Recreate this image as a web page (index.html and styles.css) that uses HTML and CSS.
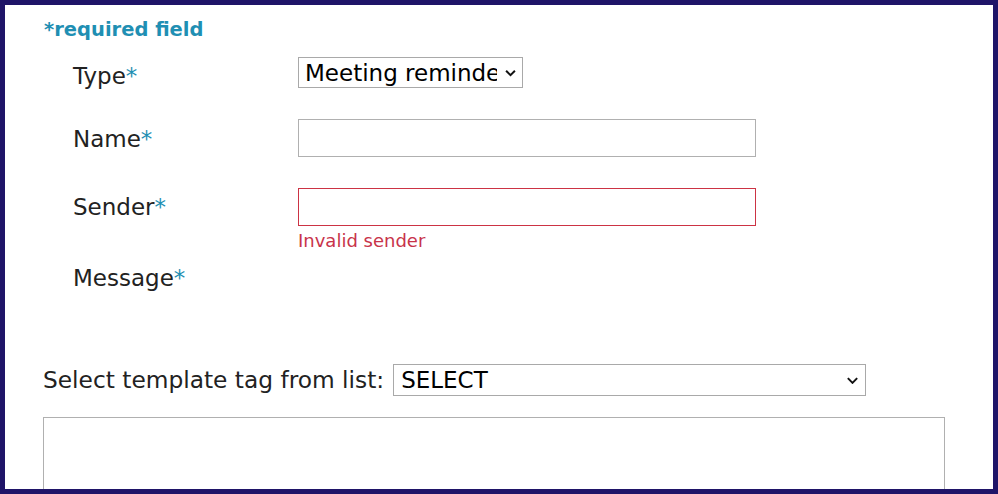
FILE: index.html
```html
<!DOCTYPE html>
<html>
<head>
<meta charset="utf-8">
<link rel="stylesheet" href="styles.css">
</head>
<body>
<div class="frame">
  <div class="required">*required field</div>
  <div class="rows">
    <div class="row row-type">
      <label class="lbl">Type<span class="star">*</span></label>
      <div class="ctl">
        <div class="select select-type"><span class="sel-text">Meeting reminder</span><svg class="chev" viewBox="0 0 10 7" width="11" height="8"><path d="M1 1.5l4 4 4-4" fill="none" stroke="#111" stroke-width="1.8"/></svg></div>
      </div>
    </div>
    <div class="row row-name">
      <label class="lbl">Name<span class="star">*</span></label>
      <div class="ctl"><div class="input"></div></div>
    </div>
    <div class="row row-sender">
      <label class="lbl">Sender<span class="star">*</span></label>
      <div class="ctl">
        <div class="input invalid"></div>
        <div class="err">Invalid sender</div>
      </div>
    </div>
    <div class="row row-msg">
      <label class="lbl">Message<span class="star">*</span></label>
    </div>
  </div>
  <div class="tagrow">
    <span class="taglbl">Select template tag from list:</span>
    <div class="select select-tag"><span class="sel-text">SELECT</span><svg class="chev" viewBox="0 0 10 6" width="13" height="7"><path d="M1 1l4 4 4-4" fill="none" stroke="#111" stroke-width="1.7"/></svg></div>
  </div>
  <div class="textarea"></div>
</div>
</body>
</html>
```
FILE: styles.css
```css
html, body { margin: 0; padding: 0; }
body { font-family: "DejaVu Sans", Verdana, sans-serif; color: #222; background: #fff; }
.frame {
  width: 998px; height: 494px; box-sizing: border-box;
  border: 5px solid #1f1468; overflow: hidden; background: #fff;
}
.required {
  margin: 13px 0 0 39px; font-size: 19.5px; font-weight: bold; color: #1f8fb3; line-height: 24px;
}
.rows { padding-left: 68px; }
.row { display: flex; align-items: flex-start; }
.lbl { width: 225px; flex: none; font-size: 23px; line-height: 28px; color: #222; }
.star { color: #1f8fb3; }
.row-type { margin-top: 15px; }
.row-type .lbl { padding-top: 5px; }
.row-name { margin-top: 29px; }
.row-name .lbl { padding-top: 6px; }
.row-sender { margin-top: 31px; }
.row-sender .lbl { padding-top: 5px; }
.row-msg { margin-top: 12px; }
.select {
  box-sizing: border-box; border: 1px solid #a9a9a9; background: #fff; display: flex; align-items: center;
  color: #000; font-size: 23px;
}
.select-type { width: 225px; height: 31px; padding: 0 6px 0 6px; }
.select-type .sel-text { flex: 1; overflow: hidden; white-space: nowrap; }
.select-type .chev { margin-left: 8px; flex: none; }
.input { box-sizing: border-box; width: 458px; height: 38px; border: 1px solid #b0b0b0; background: #fff; }
.input.invalid { border-color: #cc3344; }
.err { color: #c8334a; font-size: 18px; line-height: 22px; margin-top: 4px; }
.tagrow { display: flex; align-items: center; margin: 72px 0 0 38px; }
.taglbl { font-size: 23.3px; line-height: 28px; color: #222; margin-right: 9px; }
.select-tag { width: 473px; height: 32px; padding: 0 6px 0 7px; }
.select-tag .sel-text { flex: 1; }
.select-tag .chev { flex: none; }
.textarea { box-sizing: border-box; width: 902px; height: 120px; margin: 21px 0 0 38px; border: 1px solid #b0b0b0; }
```
